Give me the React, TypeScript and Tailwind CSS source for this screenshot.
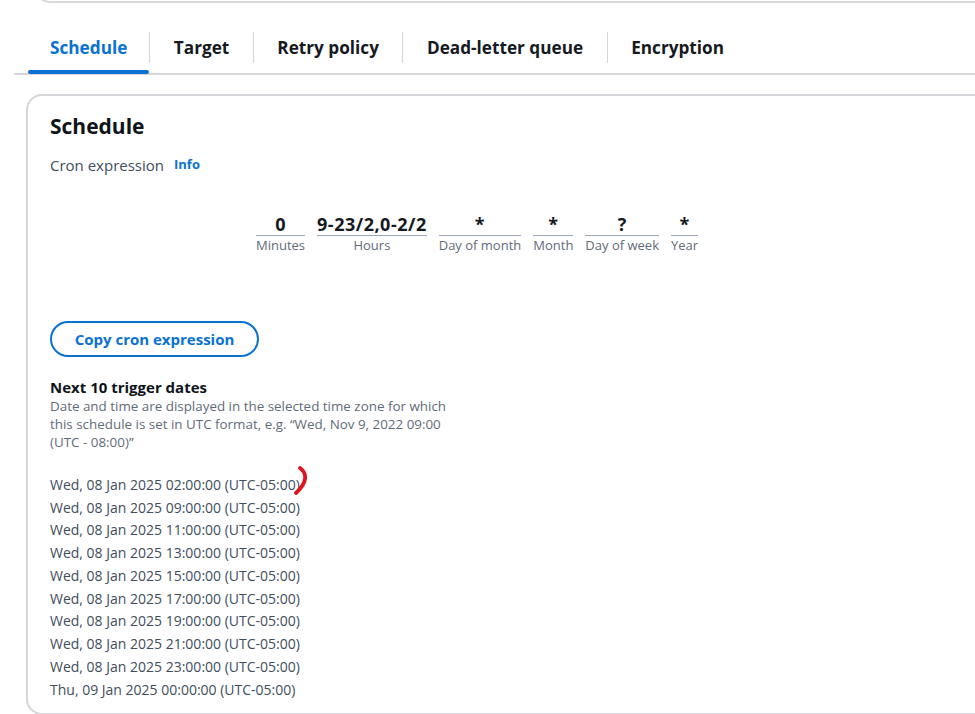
import React from "react";

const tabs = ["Schedule", "Target", "Retry policy", "Dead-letter queue", "Encryption"];
const fields = [
  { v: "0", l: "Minutes" },
  { v: "9-23/2,0-2/2", l: "Hours" },
  { v: "*", l: "Day of month" },
  { v: "*", l: "Month" },
  { v: "?", l: "Day of week" },
  { v: "*", l: "Year" },
];
const dates = [
  "Wed, 08 Jan 2025 02:00:00 (UTC-05:00)",
  "Wed, 08 Jan 2025 09:00:00 (UTC-05:00)",
  "Wed, 08 Jan 2025 11:00:00 (UTC-05:00)",
  "Wed, 08 Jan 2025 13:00:00 (UTC-05:00)",
  "Wed, 08 Jan 2025 15:00:00 (UTC-05:00)",
  "Wed, 08 Jan 2025 17:00:00 (UTC-05:00)",
  "Wed, 08 Jan 2025 19:00:00 (UTC-05:00)",
  "Wed, 08 Jan 2025 21:00:00 (UTC-05:00)",
  "Wed, 08 Jan 2025 23:00:00 (UTC-05:00)",
  "Thu, 09 Jan 2025 00:00:00 (UTC-05:00)",
];

export default function App() {
  return (
    <div
      className="relative w-[975px] h-[714px] overflow-hidden bg-white"
      style={{ fontFamily: '"Open Sans", "Noto Sans", sans-serif' }}
    >
      {/* previous card remnant */}
      <div className="-mt-[40px] ml-[34px] -mr-[40px] h-[43px] rounded-[16px] border-2 border-[#d5d5da]" />

      {/* tabs */}
      <div className="mt-[29px] ml-[14px] pl-[14px] flex items-start h-[43px] border-b-2 border-[#d5d5da]">
        {tabs.map((t, i) => (
          <React.Fragment key={t}>
            {i > 0 && <div className="w-px h-[31px] bg-[#d5d5da]" />}
            <div className={"relative h-[42px] " + (i === 0 ? "pl-[22px] pr-[22px]" : "px-[23.5px]")}>
              <div
                className={
                  "h-[31px] flex items-center text-[17.2px] font-bold " +
                  (i === 0 ? "text-[#0972d3]" : "text-[#16191f]")
                }
              >
                {t}
              </div>
              {i === 0 && (
                <div className="absolute left-0 right-0 bottom-[0px] h-[4px] rounded-full bg-[#0972d3]" />
              )}
            </div>
          </React.Fragment>
        ))}
      </div>

      {/* panel */}
      <div className="mt-[19px] ml-[26px] -mr-[40px] h-[621px] rounded-[16px] border-2 border-[#d5d5da] pl-[22px] pt-[14px]">
        <h2 className="text-[21px] font-bold text-[#0f141a] leading-[32px]">Schedule</h2>
        <div className="mt-[12px] flex items-center gap-[10px] h-[22px]">
          <span className="text-[15px] text-[#414d5c]">Cron expression</span>
          <span className="text-[13px] font-bold text-[#0972d3]">Info</span>
        </div>

        <div className="mt-[38px] ml-[206px] flex gap-[12px]">
          {fields.map((f) => (
            <div key={f.l} className="flex flex-col items-stretch">
              <div className="text-center text-[18px] font-bold tracking-[0.5px] text-[#16191f] leading-[20px] border-b border-[#9ba7b6] pb-[1px]">
                {f.v}
              </div>
              <div className="text-center text-[13px] text-[#5f6b7a] leading-[18px] whitespace-nowrap">
                {f.l}
              </div>
            </div>
          ))}
        </div>

        <button className="mt-[67px] w-[209px] h-[36px] rounded-full border-2 border-[#0972d3] text-[15px] font-bold text-[#0972d3] flex items-center justify-center">
          Copy cron expression
        </button>

        <div className="mt-[20px] text-[15px] font-bold text-[#0f141a] leading-[20px]">Next 10 trigger dates</div>
        <div className="w-[402px] text-[13.4px] text-[#5f6b7a] leading-[18px]">
          Date and time are displayed in the selected time zone for which this schedule is set in UTC format, e.g. “Wed, Nov 9, 2022 09:00 (UTC - 08:00)”
        </div>

        <div className="mt-[22px] flex flex-col">
          {dates.map((d, i) => (
            <div key={i} className="relative h-[22.75px] flex items-center text-[14px] text-[#414d5c] whitespace-nowrap">
              {d}
              {i === 0 && (
                <svg
                  className="absolute left-[244px] top-[-7px]"
                  width="18"
                  height="32"
                  viewBox="0 0 18 32"
                  fill="none"
                >
                  <path d="M6 2 C13 7 14 16 2 27" stroke="#e0141e" strokeWidth="3.8" strokeLinecap="round" />
                </svg>
              )}
            </div>
          ))}
        </div>
      </div>
    </div>
  );
}
